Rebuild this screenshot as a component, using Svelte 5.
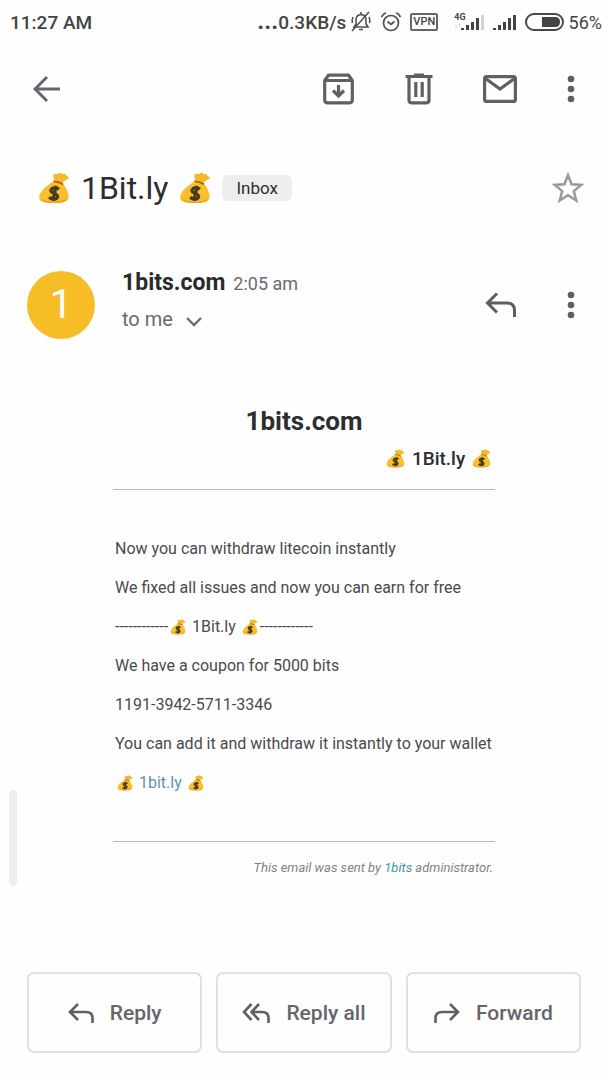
<script>
  const subject = "1Bit.ly";
  const sender = "1bits.com";

  const intro = [
    "Now you can withdraw litecoin instantly",
    "We fixed all issues and now you can earn for free",
  ];

  const coupon = [
    "We have a coupon for 5000 bits",
    "1191-3942-5711-3346",
    "You can add it and withdraw it instantly to your wallet",
  ];

  const dashes = "------------";
</script>

<svelte:head>
  <title>{subject}</title>
</svelte:head>

{#snippet moneyBag()}
  <svg class="bag" viewBox="0 0 36 36" aria-hidden="true">
    <path
      d="M17 11 C12 14 3 20 1.5 27 C0 33 5 35 17 35 C30 35 35 33 34.5 27 C34 20 29 14 27 12 Z"
      fill="#fbbf2d"
    />
    <path
      d="M18.500 10 C18 7 16 4 18 2.500 C20 1.500 21 2.800 23 2 C24.500 0 27 .6 28 2.800 C30 1.800 32 2 31.800 4.500 C35.500 5 35.500 8 32.800 8.500 C30 9.500 28.500 11 27.500 13 Z"
      fill="#f7b92c"
    />
    <path d="M18 10.500 Q23 10.500 27.500 13.500" stroke="#a8690c" stroke-width="2" fill="none" stroke-linecap="round" />
    <path d="M3 30 Q17 37 33 30 Q31 35 18 35 Q6 35 3 30" fill="#e9a51d" />
    <path
      d="M23.500 19.500 Q20 16.500 16 18.500 Q12.500 21.500 17 23.500 L20 24.800 Q24 27.500 20.500 30 Q16 31.500 12.500 28.500 M20.500 15.500 L16.500 32.500"
      stroke="#463c20"
      stroke-width="3.600"
      fill="none"
    />
  </svg>
{/snippet}

{#snippet dots()}
  <svg width="8" height="28" viewBox="0 0 8 28" fill="#5f5f63" aria-hidden="true">
    <circle cx="4" cy="4" r="3.300" />
    <circle cx="4" cy="14" r="3.300" />
    <circle cx="4" cy="24" r="3.300" />
  </svg>
{/snippet}

{#snippet signal(lastBar)}
  <svg width="24" height="18" viewBox="0 0 24 18" fill="#444" aria-hidden="true">
    <path d="M0 15h3v2H0zM5 12h3v5H5zM10 9h3v8h-3zM15 5h3v12h-3z" />
    <path d="M20 2h3v15h-3z" fill={lastBar} />
  </svg>
{/snippet}

<div class="screen">
  <header class="status">
    <span class="clock">11:27 AM</span>
    <div class="indicators">
      <span class="speed"><b>...</b>0.3KB/s</span>
      <svg width="22" height="22" viewBox="0 0 22 22" fill="none" stroke="#505050" stroke-width="1.600" aria-hidden="true">
        <path d="M4 16 H18 L16 13 V9 Q16 4 11 3.500 Q6 4 6 9 V13 Z M9 18.500 H13 M11 3V1 M2 20 L19 1 M2.500 12 Q1.500 9 3 6 M19.500 12 Q20.500 9 19 6" />
      </svg>
      <svg class="alarm" width="22" height="22" viewBox="0 0 22 22" fill="none" stroke="#505050" stroke-width="1.700" aria-hidden="true">
        <circle cx="11" cy="12" r="7.500" />
        <path d="M7.500 10.500 L11 13.500 L14.500 10.500 M1.500 6 Q3 3 6 1.800 M20.500 6 Q19 3 16 1.800" />
      </svg>
      <span class="vpn">VPN</span>
      <span class="network">
        <small>4G</small>
        <small class="arrows">↓↑</small>
      </span>
      {@render signal("#d4d4d4")}
      <span class="second-sim">{@render signal("#444")}</span>
      <svg width="40" height="18" viewBox="0 0 40 18" aria-hidden="true">
        <rect x="1" y="1" width="37" height="16" rx="8" fill="#fff" stroke="#484848" stroke-width="2" />
        <path d="M17 4 H30 Q35 4 35 9 Q35 14 30 14 H17 Z" fill="#444" />
      </svg>
      <span class="percent">56%</span>
    </div>
  </header>

  <nav class="toolbar">
    <button aria-label="Back">
      <svg width="28" height="28" viewBox="0 0 28 28" fill="none" stroke="#65656e" stroke-width="3" aria-hidden="true">
        <path d="M27 14 H2 M14 2 L2 14 L14 26" />
      </svg>
    </button>
    <div class="tools">
      <button aria-label="Archive">
        <svg width="32" height="32" viewBox="0 0 32 32" fill="none" stroke="#606063" stroke-width="3.200" aria-hidden="true">
          <path d="M1.700 7.500 L5.500 2.200 H25.500 L29.300 7.500 V27 Q29.300 29.800 26.500 29.800 H4.500 Q1.700 29.800 1.700 27 Z M1.700 7.500 H29.300" stroke-linejoin="round" />
          <path d="M15.500 12 V23 M10 17.500 L15.500 23 L21 17.500" />
        </svg>
      </button>
      <button aria-label="Delete">
        <svg width="28" height="32" viewBox="0 0 28 32" fill="none" stroke="#606063" stroke-width="3.200" aria-hidden="true">
          <path d="M.5 3.500 H27.500 M9 2 H19 M4 4 V27 Q4 29.800 6.500 29.800 H21.500 Q24 29.800 24 27 V4 M10.800 9 V24 M17.200 9 V24" />
        </svg>
      </button>
      <button aria-label="Mark as unread">
        <svg width="34" height="28" viewBox="0 0 34 28" fill="none" stroke="#606063" stroke-width="3.200" aria-hidden="true">
          <rect x="1.600" y="1.600" width="30.800" height="24.800" rx="2" />
          <path d="M2.500 3.500 L17 14 L31.500 3.500" />
        </svg>
      </button>
      <button aria-label="More options">{@render dots()}</button>
    </div>
  </nav>

  <main>
    <div class="subject">
      <h1>{@render moneyBag()} {subject} {@render moneyBag()}</h1>
      <span class="label">Inbox</span>
      <button class="star" aria-label="Add star">
        <svg width="32" height="32" viewBox="0 0 32 32" fill="none" stroke="#98989f" stroke-width="2.500" aria-hidden="true">
          <path d="M16 3.200 L19.600 12.200 L29.200 12.900 L21.800 19.100 L24.200 28.500 L16 23.300 L7.800 28.500 L10.200 19.100 L2.800 12.900 L12.400 12.200 Z" />
        </svg>
      </button>
    </div>

    <div class="sender">
      <div class="avatar">1</div>
      <div class="from">
        <div><strong>{sender}</strong> <time>2:05 am</time></div>
        <button class="recipient">
          to me
          <svg width="16" height="10" viewBox="0 0 16 10" fill="none" stroke="#6b6b70" stroke-width="2.400" aria-hidden="true">
            <path d="M1 1 L8 8 L15 1" />
          </svg>
        </button>
      </div>
      <button aria-label="Reply">
        <svg width="32" height="26" viewBox="0 0 32 26" fill="none" stroke="#5f5f62" stroke-width="3" aria-hidden="true">
          <path d="M12 1.500 L2.500 11 L12 20.500 M2.500 11 H22 Q29.500 11 29.500 18.500 V25" />
        </svg>
      </button>
      <button aria-label="More options">{@render dots()}</button>
    </div>

    <article>
      <h2>{sender}</h2>
      <h3>{@render moneyBag()} {subject} {@render moneyBag()}</h3>
      <hr />
      <div class="body">
        {#each intro as line}
          <p>{line}</p>
        {/each}
        <p>
          {dashes}{@render moneyBag()} {subject}
          {@render moneyBag()}{dashes}
        </p>
        {#each coupon as line}
          <p>{line}</p>
        {/each}
        <p>{@render moneyBag()} <a href="#1bit">1bit.ly</a> {@render moneyBag()}</p>
      </div>
      <hr />
      <footer>This email was sent by <a href="#1bits">1bits</a> administrator.</footer>
    </article>

    <div class="actions">
      <button>
        <svg width="26" height="20" viewBox="0 0 26 20" fill="none" stroke="#606063" stroke-width="2.600" aria-hidden="true">
          <path d="M10 1 L2 9 L10 17 M2 9 H18 Q24.500 9 24.500 15 V20" />
        </svg>
        Reply
      </button>
      <button>
        <svg width="28" height="20" viewBox="0 0 28 20" fill="none" stroke="#606063" stroke-width="2.600" aria-hidden="true">
          <path d="M9.500 1 L2 9 L9.500 17 M17 1 L9.500 9 L17 17 M9.500 9 H20 Q26.500 9 26.500 15 V20" />
        </svg>
        Reply all
      </button>
      <button>
        <svg width="26" height="20" viewBox="0 0 26 20" fill="none" stroke="#606063" stroke-width="2.600" aria-hidden="true">
          <path d="M16 1 L24 9 L16 17 M24 9 H8 Q1.500 9 1.500 15 V20" />
        </svg>
        Forward
      </button>
    </div>
  </main>

  <div class="scrollbar"></div>
</div>

<style>
  :global(body) {
    margin: 0;
    background: #fefefe;
  }
  .screen {
    position: relative;
    font-family: Roboto, "Liberation Sans", sans-serif;
    color: #2d2d30;
    padding-bottom: 27px;
  }
  button {
    display: flex;
    align-items: center;
    border: 0;
    padding: 0;
    background: none;
    font: inherit;
    color: inherit;
  }
  svg {
    flex: none;
  }
  .status {
    display: flex;
    justify-content: space-between;
    align-items: center;
    height: 44px;
    padding: 0 6px 0 10px;
    color: #444;
  }
  .clock {
    font-size: 19px;
    font-weight: 500;
  }
  .indicators {
    display: flex;
    align-items: center;
    gap: 4px;
  }
  .speed {
    font-size: 19px;
    font-weight: 500;
    line-height: 24px;
  }
  .speed b {
    font-size: 24px;
  }
  .alarm {
    margin: 0 4px;
  }
  .vpn {
    border: 2px solid #666;
    border-radius: 2px;
    padding: 0 1px;
    font-size: 11px;
    font-weight: 500;
    line-height: 14px;
  }
  .network {
    display: flex;
    flex-direction: column;
    margin: 0 -9px 0 12px;
    font-weight: 700;
  }
  .network small {
    font-size: 9px;
    line-height: 9px;
  }
  .network .arrows {
    font-size: 7px;
    color: #999;
  }
  .second-sim {
    display: flex;
    margin: 0 4px;
  }
  .percent {
    font-size: 18px;
  }
  .toolbar {
    display: flex;
    justify-content: space-between;
    align-items: center;
    height: 90px;
    padding: 0 33px;
  }
  .tools {
    display: flex;
    align-items: center;
    gap: 50px;
  }
  .subject {
    display: flex;
    align-items: center;
    height: 108px;
    padding: 0 24px 0 35px;
  }
  h1 {
    margin: 0;
    font-size: 32px;
    font-weight: 400;
    line-height: 40px;
  }
  .bag {
    width: 1em;
    height: 1em;
    margin: 0 2px;
    vertical-align: -3px;
  }
  h1 .bag {
    margin: 0 3px;
    vertical-align: -5px;
  }
  .label {
    margin-left: 8px;
    padding: 0 14px;
    border-radius: 6px;
    background: #eee;
    font-size: 17px;
    line-height: 26px;
  }
  .star {
    margin-left: auto;
  }
  .sender {
    display: flex;
    align-items: center;
    height: 68px;
    margin-top: 29px;
    padding: 0 33px 0 27px;
  }
  .sender > button:last-child {
    margin-left: 50px;
  }
  .avatar {
    width: 68px;
    height: 68px;
    border-radius: 50%;
    background: #f7bd27;
    color: #fff;
    font-size: 40px;
    line-height: 68px;
    text-align: center;
  }
  .from {
    flex: 1;
    margin-left: 27px;
    padding-bottom: 8px;
    line-height: 34px;
    color: #6a6a6e;
  }
  .from strong {
    margin-right: 4px;
    font-size: 23px;
    font-weight: 700;
    color: #2a2a2e;
  }
  .from time {
    font-size: 18px;
  }
  .recipient {
    gap: 13px;
    font-size: 20px;
  }
  .recipient svg {
    margin-top: 6px;
  }
  article {
    margin: 62px 113px 0;
  }
  h2 {
    margin: 0;
    font-size: 26px;
    font-weight: 700;
    line-height: 40px;
    text-align: center;
  }
  h3 {
    margin: 0;
    padding: 2px 2px 14px 0;
    font-size: 19px;
    font-weight: 500;
    line-height: 32px;
    text-align: right;
  }
  hr {
    margin: 0;
    border: 0;
    border-top: 1px solid #bbb;
  }
  .body {
    padding: 39px 2px;
    font-size: 16px;
    color: #4a4a4d;
    white-space: nowrap;
  }
  p {
    margin: 0;
    line-height: 39px;
  }
  a {
    color: #6190b5;
    text-decoration: none;
  }
  footer {
    padding: 14px 2px 0 0;
    font-size: 13px;
    line-height: 24px;
    font-style: italic;
    text-align: right;
    color: #828285;
  }
  footer a {
    color: #3f93a8;
  }
  .actions {
    display: grid;
    grid-template-columns: repeat(3, 1fr);
    gap: 14px;
    margin: 92px 27px 0;
  }
  .actions button {
    justify-content: center;
    gap: 16px;
    height: 81px;
    border: 2px solid #e0e0e0;
    border-radius: 7px;
    font-size: 21px;
    font-weight: 500;
    color: #65656a;
  }
  .scrollbar {
    position: absolute;
    top: 790px;
    left: 9px;
    width: 8px;
    height: 96px;
    border-radius: 4px;
    background: #eee;
  }
</style>
